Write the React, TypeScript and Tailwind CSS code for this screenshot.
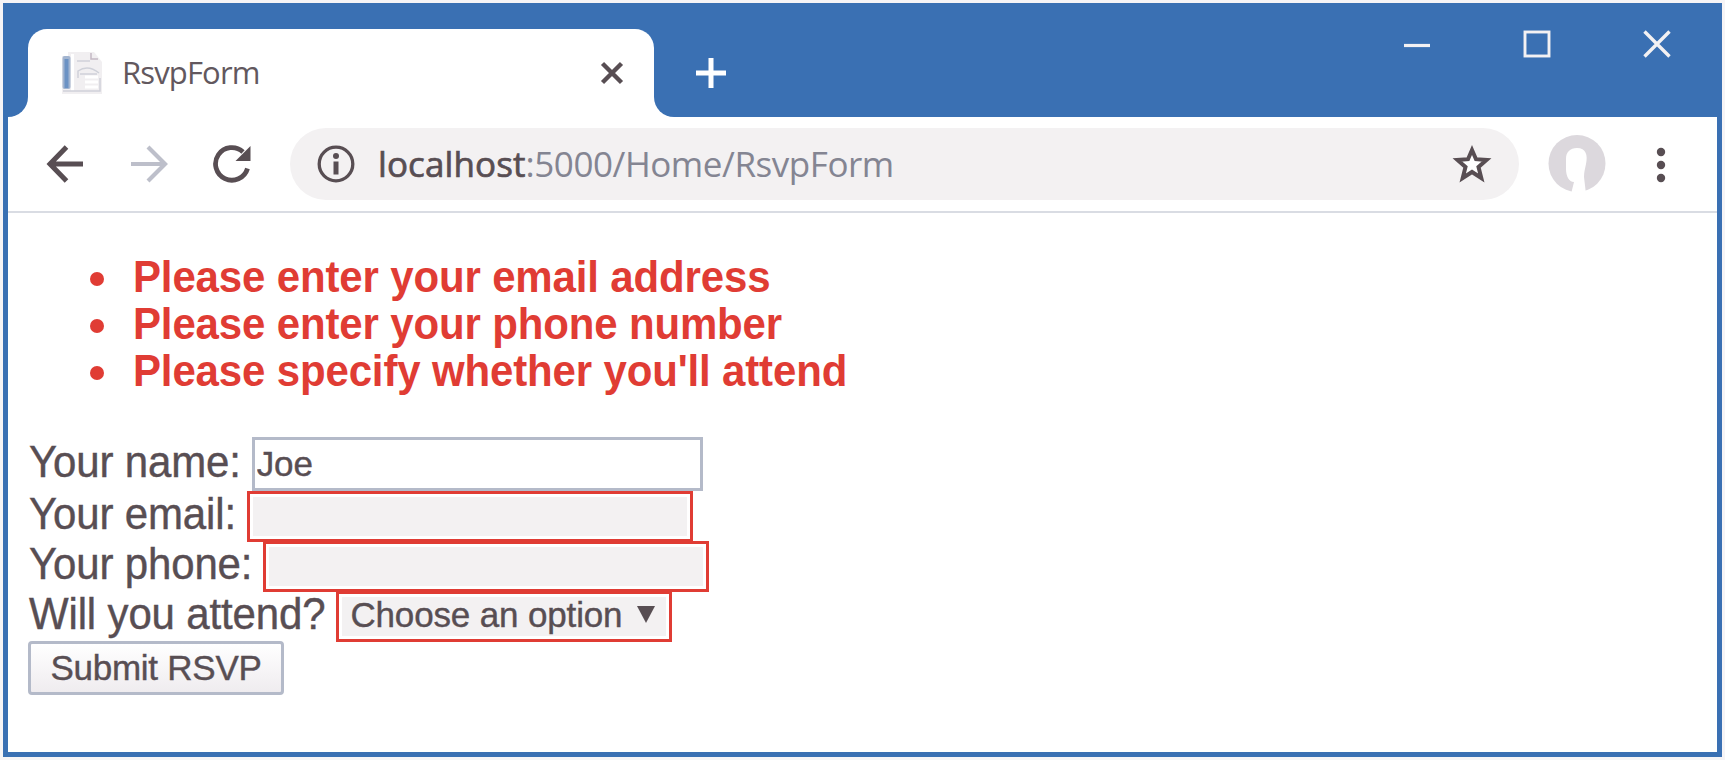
import type { ReactNode } from "react";

const errors = [
  "Please enter your email address",
  "Please enter your phone number",
  "Please specify whether you'll attend",
];

function Favicon() {
  return (
    <svg className="ml-[32px] h-[46px] w-[44px] shrink-0" viewBox="0 0 44 46">
      <path d="M2 6H8V2H34L42 12V44H2Z" fill="#f1eff1" />
      <rect x="2.500" y="6" width="8" height="33" rx="2" fill="#a3b5d0" />
      <rect x="4.500" y="9" width="4" height="29" fill="#6b92c4" />
      <path d="M12.500 4V41" stroke="#fff" strokeWidth="3" />
      <path d="M17 11H30M18 28V21Q28 14 39 23M20 24H37M3 41H40V28" fill="none" stroke="#cfd1d9" strokeWidth="1.500" />
      <path d="M31 3V9H38" fill="none" stroke="#c4b9c4" strokeWidth="1.500" />
      <path d="M25 27H38M25 32H38M25 37H38" stroke="#fff" strokeWidth="3" />
    </svg>
  );
}

function TitleBar() {
  return (
    <div className="flex h-[114px] shrink-0 items-end bg-[#3a70b3]">
      <div className="h-[20px] w-[5px]" />
      <div className="h-[20px] w-[20px] bg-white">
        <div className="h-full w-full rounded-br-[20px] bg-[#3a70b3]" />
      </div>
      <div className="flex h-[88px] w-[626px] items-center rounded-t-[19px] bg-white">
        <Favicon />
        <span className="ml-[18px] flex-1 pb-[1px] font-['Open_Sans','Noto_Sans',sans-serif] text-[31px] tracking-[-0.85px] text-[#62585e]">
          RsvpForm
        </span>
        <svg className="mr-[30px] h-[24px] w-[24px]" viewBox="0 0 24 24">
          <path d="M2.500 2.500L21.500 21.500M21.500 2.500L2.500 21.500" stroke="#584e53" strokeWidth="4.400" />
        </svg>
      </div>
      <div className="h-[20px] w-[20px] bg-white">
        <div className="h-full w-full rounded-bl-[20px] bg-[#3a70b3]" />
      </div>
      <svg className="mb-[28px] ml-[21px] h-[32px] w-[32px]" viewBox="0 0 32 32">
        <path d="M16 1V31M1 16H31" stroke="#fff" strokeWidth="5" />
      </svg>
      <div className="mb-[59px] ml-auto flex gap-[92px] pr-[51px]">
        <svg className="h-[28px] w-[28px]" viewBox="0 0 28 28">
          <path d="M1 15.500H27" stroke="#f3f1f3" strokeWidth="3.200" />
        </svg>
        <svg className="h-[28px] w-[28px]" viewBox="0 0 28 28">
          <rect x="2" y="2" width="24" height="24" fill="none" stroke="#f3f1f3" strokeWidth="2.900" />
        </svg>
        <svg className="h-[28px] w-[28px]" viewBox="0 0 28 28">
          <path d="M1.500 1.500L26.500 26.500M26.500 1.500L1.500 26.500" stroke="#f3f1f3" strokeWidth="3.400" />
        </svg>
      </div>
    </div>
  );
}

function Toolbar() {
  return (
    <div className="flex h-[94px] shrink-0 items-center bg-white pl-[38px]">
      <svg className="h-[40px] w-[40px]" viewBox="0 0 40 40">
        <path d="M37 20H5M20.500 3L4 20L20.500 37" fill="none" stroke="#584e53" strokeWidth="5" />
      </svg>
      <svg className="ml-[43px] h-[40px] w-[40px]" viewBox="0 0 40 40">
        <path d="M2 20H35M19 3L36 20L19 37" fill="none" stroke="#bdbfca" strokeWidth="4.200" />
      </svg>
      <svg className="ml-[43px] h-[40px] w-[40px]" viewBox="0 0 40 40">
        <path d="M35.500 24.500A16.300 16.300 0 1 1 31 8" fill="none" stroke="#584e53" strokeWidth="4.800" />
        <path d="M38.500 2V17H23.500Z" fill="#584e53" />
      </svg>
      <div className="ml-[38px] flex h-[72px] w-[1229px] items-center rounded-full bg-[#f3f1f2] pl-[26px]">
        <svg className="h-[40px] w-[40px]" viewBox="0 0 40 40">
          <circle cx="20" cy="20" r="16.800" fill="none" stroke="#584e53" strokeWidth="3.300" />
          <circle cx="20" cy="12" r="3" fill="#584e53" />
          <rect x="17.500" y="17.500" width="5" height="13" fill="#584e53" />
        </svg>
        <span className="ml-[22px] flex-1 whitespace-nowrap font-['Open_Sans','Noto_Sans',sans-serif] text-[35px] tracking-[-0.45px] text-[#848592]">
          <span className="tracking-[0.1px] text-[#584e53] [-webkit-text-stroke:0.7px_#584e53]">localhost</span>
          :5000/Home/RsvpForm
        </span>
        <svg className="mr-[27px] h-[40px] w-[40px]" viewBox="0 0 40 40">
          <path
            d="M20 6L24 15.200L34.500 15.900L26.500 22.900L29.300 34L20 28L10.700 34L13.500 22.900L5.500 15.900L16 15.200Z"
            fill="#fff"
            stroke="#584e53"
            strokeWidth="4"
          />
        </svg>
      </div>
      <svg className="ml-[28px] h-[60px] w-[60px]" viewBox="0 0 60 60">
        <circle cx="30" cy="29.500" r="28.500" fill="#dcd8dd" />
        <path d="M30 14C39 14 41 21 39 30C38 35 37 38 37 43L39 60H24L27 48C22 48 19 42 19 35V25C19 18 23 14 30 14Z" fill="#fff" />
      </svg>
      <svg className="ml-[49px] h-[40px] w-[10px]" viewBox="0 0 10 40">
        <circle cx="5" cy="8" r="4.200" fill="#584e53" />
        <circle cx="5" cy="21" r="4.200" fill="#584e53" />
        <circle cx="5" cy="34" r="4.200" fill="#584e53" />
      </svg>
    </div>
  );
}

function Row({ label, children }: { label: string; children: ReactNode }) {
  return (
    <label className="flex h-[50px] items-center">
      <span className="mr-[11px] mb-[4px] origin-bottom scale-y-105 whitespace-nowrap leading-[47px] tracking-[-0.15px]">
        {label}
      </span>
      {children}
    </label>
  );
}

export default function App() {
  return (
    <div className="h-[760px] w-[1725px] overflow-hidden bg-[#f6f4f6] pt-[3px] pl-[3px]">
      <div className="flex h-[754px] w-[1719px] flex-col bg-[#3a70b3]">
        <TitleBar />
        <div className="mx-[5px] mb-[5px] flex flex-1 flex-col bg-white font-['Liberation_Sans',Arial,sans-serif] text-[42px] text-[#584e53]">
          <Toolbar />
          <div className="h-[2px] shrink-0 bg-[#d9dce3]" />
          <ul className="mt-[41px] pl-[82px] font-bold text-[#e03c34]">
            {errors.map((text) => (
              <li key={text} className="flex h-[47px] items-center">
                <span className="mt-[3px] h-[14px] w-[14px] rounded-full bg-current" />
                <span className="ml-[29px] origin-bottom scale-y-105 whitespace-nowrap leading-[47px] tracking-[-0.15px]">
                  {text}
                </span>
              </li>
            ))}
          </ul>
          <form
            className="mt-[42px] flex flex-col items-start pl-[20px] [-webkit-text-stroke:0.4px_#584e53]"
            onSubmit={(e) => e.preventDefault()}
          >
            <label className="flex h-[54px] items-center pl-[1px]">
              <span className="mr-[11px] mb-[4px] origin-bottom scale-y-105 whitespace-nowrap leading-[47px] tracking-[-0.15px]">
                Your name:
              </span>
              <input
                defaultValue="Joe"
                className="h-[54px] w-[451px] border-[3px] border-[#b4bac9] bg-white px-[2px] text-[35px] tracking-[-0.15px] outline-none"
              />
            </label>
            <div className="flex flex-col items-start pl-[1px]">
              <Row label="Your email:">
                <input className="h-[51px] w-[446px] border-[3px] border-[#e03c34] bg-[#f3f1f2] shadow-[inset_0_0_0_3px_#fff] outline-none" />
              </Row>
              <Row label="Your phone:">
                <input className="h-[51px] w-[446px] border-[3px] border-[#e03c34] bg-[#f3f1f2] shadow-[inset_0_0_0_3px_#fff] outline-none" />
              </Row>
              <Row label="Will you attend?">
                <button
                  type="button"
                  className="flex h-[51px] w-[336px] items-center border-[3px] border-[#e03c34] bg-[#f3f1f2] pb-[2px] pl-[11px] text-[35px] tracking-[-0.15px] whitespace-nowrap shadow-[inset_0_0_0_3px_#fff]"
                >
                  Choose an option
                  <svg className="mr-[14px] mb-[2px] ml-auto h-[17px] w-[18px]" viewBox="0 0 18 17">
                    <path d="M0 0H18L9 17Z" fill="#584e53" />
                  </svg>
                </button>
              </Row>
            </div>
            <button
              type="submit"
              className="h-[54px] w-[256px] rounded-[4px] border-[3px] border-[#b4bac9] bg-linear-to-b from-white to-[#efecef] text-[35px] leading-[46px] tracking-[-0.25px] whitespace-nowrap"
            >
              Submit RSVP
            </button>
          </form>
        </div>
      </div>
    </div>
  );
}
